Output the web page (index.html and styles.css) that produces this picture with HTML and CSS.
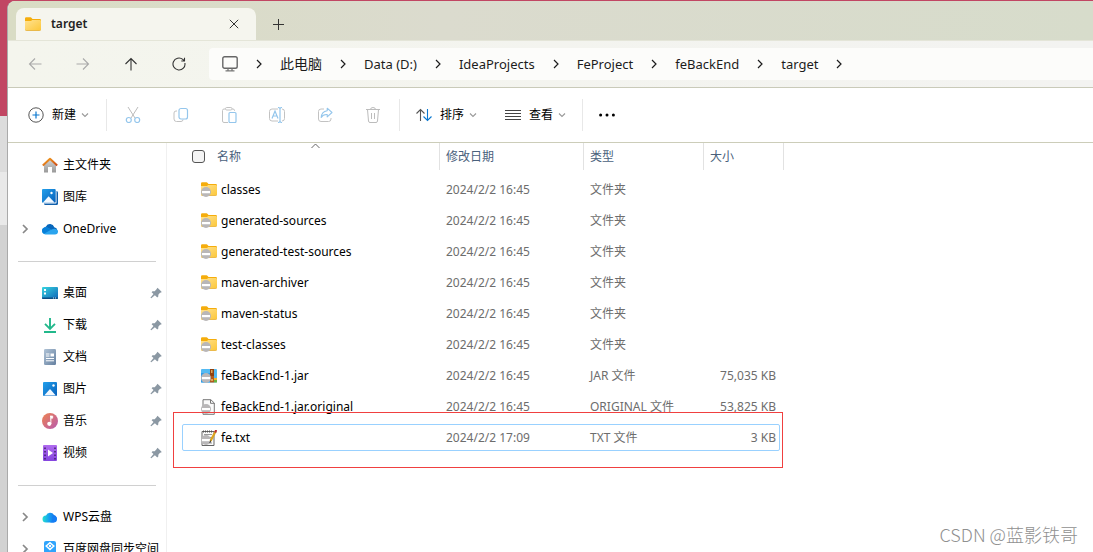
FILE: index.html
```html
<!DOCTYPE html>
<html lang="zh-CN">
<head>
<meta charset="utf-8">
<title>target</title>
<link rel="stylesheet" href="styles.css">
</head>
<body>
<svg class="defs" width="0" height="0" aria-hidden="true">
  <defs>
    <linearGradient id="gold" x1="0" y1="0" x2="1" y2="1"><stop offset="0" stop-color="#ffe291"/><stop offset="1" stop-color="#fcc739"/></linearGradient>
    <linearGradient id="silver" x1="0" y1="0" x2="0" y2="1"><stop offset="0" stop-color="#d8d8d8"/><stop offset="1" stop-color="#999"/></linearGradient>
    <linearGradient id="roof" x1="0" y1="0" x2="1" y2="1"><stop offset="0" stop-color="#f5a31f"/><stop offset="1" stop-color="#cd4b19"/></linearGradient>
    <linearGradient id="blue" x1="0" y1="0" x2="1" y2="1"><stop offset="0" stop-color="#22a0eb"/><stop offset="1" stop-color="#0860bb"/></linearGradient>
    <linearGradient id="cyan" x1="0" y1="0" x2="1" y2="1"><stop offset="0" stop-color="#37d5e0"/><stop offset="1" stop-color="#1065b8"/></linearGradient>
    <linearGradient id="steel" x1="0" y1="0" x2="1" y2="1"><stop offset="0" stop-color="#b0c3d6"/><stop offset="1" stop-color="#6580a0"/></linearGradient>
    <linearGradient id="coral" x1="0" y1="0" x2="1" y2="1"><stop offset="0" stop-color="#ef8350"/><stop offset="1" stop-color="#b65ab0"/></linearGradient>
    <linearGradient id="purple" x1="0" y1="0" x2="0" y2="1"><stop offset="0" stop-color="#b06bef"/><stop offset="1" stop-color="#8445df"/></linearGradient>
    <linearGradient id="wps" x1="0" y1="0" x2="1" y2="0"><stop offset="0" stop-color="#25e0d0"/><stop offset=".5" stop-color="#159bf2"/><stop offset="1" stop-color="#1466e8"/></linearGradient>
    <symbol id="chev" viewBox="0 0 8 10"><path d="M2 1l4 4-4 4" fill="none" stroke="currentColor" stroke-width="1.2"/></symbol>
    <symbol id="chev-bold" viewBox="0 0 8 10"><path d="M2 1l4 4-4 4" fill="none" stroke="currentColor" stroke-width="1.7"/></symbol>
    <symbol id="down" viewBox="0 0 8 6"><path d="M1 1.500l3 3 3-3" fill="none" stroke="currentColor" stroke-width="1.1"/></symbol>
    <symbol id="pin" viewBox="0 0 12 12"><path d="M7.500.8L11.400 4.500v1l-1.400.3-1.700 1.900v1.800l-1 1-2.400-2.300L1.300 11.300l-.9-.6 3.100-3.600L1.600 5.200l.9-1h2.200l1.600-1.600z" fill="#8b98a3"/></symbol>
    <symbol id="overlay" viewBox="0 0 10 10"><circle cx="5" cy="5" r="5" fill="#b9b7b8"/><path d="M1 4h8v2.200H1z" fill="#fff"/></symbol>
    <symbol id="folder" viewBox="0 0 16 14"><path d="M0 1.500Q0 .3 1.200.3h4.300q.7 0 1.100.6l.9 1.200h7.300q1.200 0 1.200 1.200V8H0z" fill="#f5ad0c"/><path d="M0 4h6l1.200-1h7.600q1.200 0 1.200 1.200v8q0 1.300-1.300 1.300H1.300Q0 13.500 0 12.200z" fill="url(#gold)"/><path d="M.2 12.700q.3.8 1.100.8h13.400q.8 0 1.100-.8" fill="none" stroke="#e3a728" stroke-width=".7"/></symbol>
    <symbol id="file-folder" viewBox="0 0 16 16"><use href="#folder" width="16" height="14"/><use href="#overlay" y="5" width="10" height="10"/></symbol>
  </defs>
</svg>

<div class="window">
  <header class="tabs">
    <div class="tab">
      <svg class="tab-icon" viewBox="0 0 16 14"><use href="#folder" width="16" height="14"/></svg>
      <span class="tab-title">target</span>
      <button class="plain" aria-label="关闭"><svg width="10" height="10" viewBox="0 0 10 10"><path d="M.8.8l8.400 8.400M9.200.8L.8 9.200" stroke="#333"/></svg></button>
    </div>
    <button class="plain add" aria-label="新标签页"><svg width="11" height="11" viewBox="0 0 11 11"><path d="M5.500 0v11M0 5.500h11" stroke="#333"/></svg></button>
  </header>

  <nav class="navbar" aria-label="导航">
    <button class="plain nav-btn faded" aria-label="后退"><svg viewBox="0 0 14 14"><path d="M7 1.500L1.500 7 7 12.500M1.500 7H13.500"/></svg></button>
    <button class="plain nav-btn faded" aria-label="前进"><svg viewBox="0 0 14 14"><path d="M7 1.500L12.500 7 7 12.500M12.500 7H.5"/></svg></button>
    <button class="plain nav-btn" aria-label="上移"><svg viewBox="0 0 14 14"><path d="M1.500 7L7 1.500 12.500 7M7 1.500V13.500"/></svg></button>
    <button class="plain nav-btn" aria-label="刷新"><svg viewBox="0 0 14 14"><path d="M12.900 6A6 6 0 1 1 10.800 2.400L12.500 4M12.500 .8V4H9.300"/></svg></button>
    <div class="address">
      <svg class="pc" viewBox="0 0 16 16"><rect x=".8" y=".8" width="14.400" height="11.400" rx="1.800" fill="none" stroke="#666" stroke-width="1.400"/><path d="M6 12.500v2M10 12.500v2M3.500 14.800h9" stroke="#777" stroke-width="1.300"/></svg>
      <svg class="sep"><use href="#chev"/></svg>
      <a href="#" class="cjk">此电脑</a><svg class="sep"><use href="#chev"/></svg>
      <a href="#">Data (D:)</a><svg class="sep"><use href="#chev"/></svg>
      <a href="#">IdeaProjects</a><svg class="sep"><use href="#chev"/></svg>
      <a href="#">FeProject</a><svg class="sep"><use href="#chev"/></svg>
      <a href="#">feBackEnd</a><svg class="sep"><use href="#chev"/></svg>
      <a href="#">target</a><svg class="sep"><use href="#chev"/></svg>
    </div>
  </nav>

  <div class="toolbar">
    <div class="group first">
      <button class="plain labeled"><svg width="16" height="16" viewBox="0 0 16 16"><circle cx="8" cy="8" r="7.200" fill="none" stroke="#555"/><path d="M8 4.500v7M4.500 8h7" stroke="#0b78d0" stroke-width="1.200"/></svg>新建<svg class="down"><use href="#down"/></svg></button>
    </div>
    <div class="group icons">
      <button class="plain" aria-label="剪切"><svg width="16" height="16" viewBox="0 0 16 16" fill="none"><path d="M3 0l7 11M13 0L6 11" stroke="#bbb"/><circle cx="3.800" cy="13" r="2.500" stroke="#94c6ec" stroke-width="1.200"/><circle cx="12.200" cy="13" r="2.500" stroke="#94c6ec" stroke-width="1.200"/></svg></button>
      <button class="plain" aria-label="复制"><svg width="16" height="16" viewBox="0 0 16 16" fill="none"><path d="M4 4H3Q1 4 1 6v6q0 2.500 2.500 2.500H8q2 0 2-2" stroke="#c2c2c2"/><rect x="6" y="1.500" width="8.500" height="10.500" rx="2" stroke="#94c6ec" stroke-width="1.200"/></svg></button>
      <button class="plain" aria-label="粘贴"><svg width="16" height="16" viewBox="0 0 16 16" fill="none"><path d="M4.500 2H3Q1.500 2 1.500 3.500v10.500q0 1.500 1.500 1.500h4M11 2h1q1.500 0 1.500 1.500V4" stroke="#c2c2c2"/><rect x="4.500" y=".5" width="6.500" height="2.500" rx="1.200" stroke="#c2c2c2"/><rect x="8" y="5.500" width="7" height="10" rx="1" stroke="#94c6ec" stroke-width="1.200"/></svg></button>
      <button class="plain" aria-label="重命名"><svg width="16" height="16" viewBox="0 0 16 16" fill="none"><path d="M9 2H3Q.5 2 .5 4.500v7Q.5 14 3 14h6M13 2q2.500 0 2.500 2.500v7q0 2.500-2.500 2.500" stroke="#c2c2c2"/><path d="M3 11.500L6 4l3 7.500M4 9h4M9 .5q2 0 2 1.500v12q0 1.500-2 1.500M13 .5q-2 0-2 1.500M11 14q0 1.500 2 1.500" stroke="#94c6ec" stroke-width="1.200"/></svg></button>
      <button class="plain" aria-label="共享"><svg width="16" height="16" viewBox="0 0 16 16" fill="none"><path d="M7 2H4Q1.500 2 1.500 4.500V12q0 2.500 2.500 2.500h7.500q2.500 0 2.500-2.500v-1" stroke="#c2c2c2"/><path d="M10.200 1.200L15 5.500l-4.800 4.300V7.500Q6 7.200 4.200 10.500 4.500 4.500 10.200 3.700z" stroke="#94c6ec" stroke-width="1.100" stroke-linejoin="round"/></svg></button>
      <button class="plain" aria-label="删除"><svg width="16" height="16" viewBox="0 0 16 16" fill="none" stroke="#bcbcbc"><path d="M1 2.500h14M5.500 2.500Q5.500.5 8 .5t2.500 2M2.500 2.500l1 11.500q.1 1.500 1.500 1.500h6q1.400 0 1.500-1.500l1-11.500M6.500 6v6M9.500 6v6"/></svg></button>
    </div>
    <div class="group views">
      <button class="plain labeled"><svg width="16" height="14" viewBox="0 0 16 14" fill="none" stroke-width="1.100"><path d="M.5 5.500l4-4 4 4M4.500 1.500V13" stroke="#555"/><path d="M7.500 8.500l4 4 4-4M11.500 1v11.500" stroke="#0b78d0"/></svg>排序<svg class="down"><use href="#down"/></svg></button>
      <button class="plain labeled"><svg width="16" height="12" viewBox="0 0 16 12"><path d="M0 1.500h16M0 4.500h16M0 7.500h16M0 10.500h16" stroke="#444"/></svg>查看<svg class="down"><use href="#down"/></svg></button>
    </div>
    <div class="group last">
      <button class="plain" aria-label="更多"><svg width="16" height="4" viewBox="0 0 16 4"><circle cx="1.600" cy="2" r="1.500"/><circle cx="8" cy="2" r="1.500"/><circle cx="14.400" cy="2" r="1.500"/></svg></button>
    </div>
  </div>

  <div class="content">
    <aside class="sidebar">
      <a href="#" class="item"><i></i><svg class="ico" viewBox="0 0 16 16"><path d="M2 7l6-5.500L14 7v8.500H10V10H6v5.500H2z" fill="url(#silver)"/><path d="M.8 8.500L8 1.800l7.200 6.700" fill="none" stroke="url(#roof)" stroke-width="2" stroke-linejoin="round"/></svg>主文件夹</a>
      <a href="#" class="item"><i></i><svg class="ico" viewBox="0 0 16 16"><rect x="2" y="2" width="14" height="14" rx="1.500" fill="#1260ac"/><rect width="14.500" height="14.500" rx="1" fill="#fff"/><rect width="13.700" height="13.700" rx="1" fill="url(#blue)"/><path d="M.8 13.700L6.600 7.200l6.200 6.500z" fill="#f3f9ff"/><circle cx="9.500" cy="4" r="1.200" fill="#fff"/></svg>图库</a>
      <a href="#" class="item"><svg class="exp"><use href="#chev-bold"/></svg><svg class="ico" viewBox="0 0 16 16"><path d="M4 13a4 4 0 0 1 0-7.500 4.500 4.500 0 0 1 8.300.7A3.500 3.500 0 0 1 13 13z" fill="#0867bb"/><path d="M3.500 13.500Q0 13 0 9.800 0 6.500 4 6.300q2.200 0 5 2.500 5-2.500 7 1.200.2 3.500-3 3.500z" fill="#2aa4ee"/><path d="M0 9.800q0-3.300 4-3.500 2.300 0 5 2.500l-7 4Q0 12 0 9.800z" fill="#087fd8"/></svg>OneDrive</a>
      <hr>
      <a href="#" class="item"><i></i><svg class="ico" viewBox="0 0 16 16"><rect y="2" width="16" height="12" rx="1" fill="url(#cyan)"/><path d="M0 12.500h16V13q0 1-1 1H1q-1 0-1-1z" fill="#0b4f85"/><path d="M2 4h2v2H2zM2 7.500h2v2H2z" fill="#fff"/><path d="M11 13h1M13 13h1" stroke="#fff" stroke-width=".8"/></svg><span>桌面</span><svg class="pin"><use href="#pin"/></svg></a>
      <a href="#" class="item"><i></i><svg class="ico" viewBox="0 0 16 16"><path d="M8 1v10M3 6.800l5 5 5-5M2 15h12" fill="none" stroke="#22b88b" stroke-width="1.900"/></svg><span>下载</span><svg class="pin"><use href="#pin"/></svg></a>
      <a href="#" class="item"><i></i><svg class="ico" viewBox="0 0 16 16"><rect x="2" width="12" height="16" rx="1.200" fill="url(#steel)"/><path d="M4 5h3.500M4 7h3.500M4 9.500h8M4 11.800h8" stroke="#fff"/><path d="M8.500 4.500H12v3H8.500z" fill="#fff"/></svg><span>文档</span><svg class="pin"><use href="#pin"/></svg></a>
      <a href="#" class="item"><i></i><svg class="ico" viewBox="0 0 16 16"><rect x="1" y="1" width="14" height="14" rx="1" fill="url(#blue)"/><path d="M2.200 14.500L8 8l5.800 6.500z" fill="#f3f9ff"/><circle cx="11.500" cy="4.500" r="1.200" fill="#fff"/></svg><span>图片</span><svg class="pin"><use href="#pin"/></svg></a>
      <a href="#" class="item"><i></i><svg class="ico" viewBox="0 0 16 16"><circle cx="8" cy="8" r="8" fill="url(#coral)"/><path d="M8 3h2.700v2.200H9V11" fill="#fff" stroke="#fff" stroke-width=".7"/><circle cx="7.300" cy="10.800" r="2.100" fill="#fff"/></svg><span>音乐</span><svg class="pin"><use href="#pin"/></svg></a>
      <a href="#" class="item"><i></i><svg class="ico" viewBox="0 0 16 16"><rect x="1" width="14" height="16" rx="1" fill="url(#purple)"/><path d="M3 2.500v12M13 2.500v12" stroke="#402068" stroke-width="1.500" stroke-dasharray="1.500 2"/><path d="M6 4.500l5 3.500-5 3.500z" fill="#fff"/></svg><span>视频</span><svg class="pin"><use href="#pin"/></svg></a>
      <hr>
      <a href="#" class="item"><svg class="exp"><use href="#chev-bold"/></svg><svg class="ico" viewBox="0 0 16 16"><path d="M4 13.500A3.500 3.500 0 0 1 4 6.500 4.500 4.500 0 0 1 12 6a3.900 3.900 0 0 1-.5 7.500z" fill="url(#wps)"/><path d="M8 13.500q3.500-2 2.500-6 4.500-1.300 4.500 2.500 0 3.500-3.500 3.500z" fill="#147df4"/></svg>WPS云盘</a>
      <a href="#" class="item"><svg class="exp"><use href="#chev-bold"/></svg><svg class="ico" viewBox="0 0 16 16"><rect x="2" y="0" width="12" height="16" rx="2" fill="#2fa4fc"/><path d="M8 1.800L11.800 5 8 8.500 4.200 5z" fill="none" stroke="#fff" stroke-width="1.500"/><circle cx="8" cy="5" r="1.200" fill="#fff"/></svg>百度网盘同步空间</a>
    </aside>

    <main class="files">
      <table>
        <colgroup><col class="c-name"><col class="c-date"><col class="c-type"><col class="c-size"></colgroup>
        <thead>
          <tr>
            <th><label class="all"><input type="checkbox">名称</label><svg class="sort" viewBox="0 0 9 6"><path d="M.5 5l4-4 4 4" fill="none" stroke="#666"/></svg></th>
            <th>修改日期</th><th>类型</th><th>大小</th>
          </tr>
        </thead>
        <tbody>
          <tr><td><svg class="fico"><use href="#file-folder"/></svg>classes</td><td>2024/2/2 16:45</td><td>文件夹</td><td></td></tr>
          <tr><td><svg class="fico"><use href="#file-folder"/></svg>generated-sources</td><td>2024/2/2 16:45</td><td>文件夹</td><td></td></tr>
          <tr><td><svg class="fico"><use href="#file-folder"/></svg>generated-test-sources</td><td>2024/2/2 16:45</td><td>文件夹</td><td></td></tr>
          <tr><td><svg class="fico"><use href="#file-folder"/></svg>maven-archiver</td><td>2024/2/2 16:45</td><td>文件夹</td><td></td></tr>
          <tr><td><svg class="fico"><use href="#file-folder"/></svg>maven-status</td><td>2024/2/2 16:45</td><td>文件夹</td><td></td></tr>
          <tr><td><svg class="fico"><use href="#file-folder"/></svg>test-classes</td><td>2024/2/2 16:45</td><td>文件夹</td><td></td></tr>
          <tr><td><svg class="fico" viewBox="0 0 16 16"><rect y="1" width="16" height="13.500" rx="1" fill="#54baf2"/><path d="M0 5h9v9.500H0z" fill="#2f9ce8"/><path d="M9 1h4v7H9z" fill="#91420f"/><path d="M9 8h4v6.500H9z" fill="#b25a1c"/><path d="M10 2h1.500v3H10zM10 11h2v2h-2z" fill="#e0a55c"/><path d="M13 10h3v2h-3z" fill="#f4b831"/><path d="M13 12h3v2.500h-3z" fill="#6cb33c"/><use href="#overlay" y="5" width="10" height="10"/></svg>feBackEnd-1.jar</td><td>2024/2/2 16:45</td><td>JAR 文件</td><td class="num">75,035 KB</td></tr>
          <tr><td><svg class="fico" viewBox="0 0 16 16"><path d="M2 .7h7.800L13.300 4v11.300H2z" fill="#fafafa" stroke="#777"/><path d="M9.500.7v3.600h3.800" fill="none" stroke="#777"/><use href="#overlay" y="5" width="10" height="10"/></svg>feBackEnd-1.jar.original</td><td>2024/2/2 16:45</td><td>ORIGINAL 文件</td><td class="num">53,825 KB</td></tr>
          <tr class="selected"><td><svg class="fico" viewBox="0 0 16 16"><path d="M1 1.500h12v14H1z" fill="#fafafa" stroke="#666"/><path d="M2 1.500h10" stroke="#555" stroke-width="2" stroke-dasharray="1 1"/><path d="M3 4.500h8M7 7.500h4M8 10.500h3M8 13h3" stroke="#999"/><use href="#overlay" y="5" width="10" height="10"/><path d="M14.500 1.500L9.500 11" stroke="#dda51d" stroke-width="2.200"/><path d="M15.300 0l-1.200 2.500" stroke="#bb3434" stroke-width="2.200"/><path d="M9.700 10.500l-.9 2.500" stroke="#333"/></svg>fe.txt</td><td>2024/2/2 17:09</td><td>TXT 文件</td><td class="num">3 KB</td></tr>
        </tbody>
      </table>
    </main>
  </div>
</div>
<div class="watermark">CSDN @蓝影铁哥</div>
</body>
</html>
```
FILE: styles.css
```css
* { box-sizing: border-box; }

body {
  margin: 0;
  height: 100vh;
  overflow: hidden;
  display: flex;
  padding: 1px 0 0 7px;
  background: linear-gradient(#c14663 0 116px, #dcdcdc 116px 172px, #e9e9e9 172px 225px, #d2d2d2 225px);
  font-family: "Noto Sans", "Noto Sans CJK SC", sans-serif;
  font-size: 12px;
  line-height: 16px;
  color: #000;
}

a { color: inherit; text-decoration: none; }
svg { display: block; flex: none; }
.defs { position: absolute; }

.plain {
  display: flex;
  align-items: center;
  justify-content: center;
  padding: 0;
  border: 0;
  background: none;
  font: inherit;
  color: inherit;
}

.window {
  flex: 1;
  min-width: 0;
  display: flex;
  flex-direction: column;
  background: #fff;
  border-left: 1px solid #aaa;
  border-radius: 8px 0 0 0;
  overflow: hidden;
}

.tabs {
  display: flex;
  align-items: flex-end;
  height: 40px;
  flex: none;
  padding-left: 8px;
  background: linear-gradient(90deg, #d9dcc4, #dbdbce 40%, #d7dccb);
  border-bottom: 1px solid #e4e5d8;
}
.tab {
  display: flex;
  align-items: center;
  width: 240px;
  height: 32px;
  padding: 0 17px 0 9px;
  background: #f5f5ee;
  border-radius: 8px 8px 0 0;
}
.tab-icon { width: 16px; height: 14px; }
.tab-title { flex: 1; margin-left: 10px; font-weight: 600; color: #222; }
.add { width: 44px; height: 32px; }

.navbar {
  display: flex;
  align-items: center;
  flex: none;
  height: 47px;
  padding-left: 3px;
  background: linear-gradient(90deg, #f4f5ed, #f3f3f1);
  border-bottom: 1px solid #c9cab9;
}
.nav-btn { width: 48px; height: 32px; }
.nav-btn svg { width: 14px; height: 14px; fill: none; stroke: #333; stroke-width: 1.1; }
.faded svg { stroke: #aaa; }
.address {
  display: flex;
  align-items: center;
  flex: 1;
  gap: 17px;
  height: 32px;
  margin-left: 6px;
  padding-left: 13px;
  background: #fcfcfa;
  border-radius: 4px 0 0 4px;
  font-size: 13px;
  color: #1c1c1c;
}
.cjk { font-size: 14px; }
.pc { width: 16px; height: 16px; }
.sep { width: 8px; height: 10px; }

.toolbar {
  display: flex;
  align-items: center;
  flex: none;
  height: 55px;
  border-bottom: 1px solid #cccdb9;
}
.group {
  display: flex;
  align-items: center;
  height: 32px;
  border-right: 1px solid #e8e8e8;
}
.group.first { padding: 0 17px 0 20px; }
.group.icons { gap: 32px; padding: 0 18px; }
.group.views { gap: 28px; padding: 0 16px; }
.group.last { border: 0; padding-left: 16px; }
.labeled { gap: 8px; }
.down { width: 8px; height: 6px; margin-left: -3px; color: #999; }

.content { flex: 1; display: flex; min-height: 0; }
.sidebar {
  flex: none;
  width: 159px;
  padding-top: 6px;
  overflow: hidden;
  border-right: 1px solid #f0f0f0;
}
.item {
  display: flex;
  align-items: center;
  height: 32px;
  padding: 0 4px 0 13px;
  white-space: nowrap;
}
.item i, .exp { width: 8px; height: 10px; flex: none; color: #888; }
.ico { width: 16px; height: 16px; margin: 0 5px 0 13px; }
.pin { width: 12px; height: 12px; margin-left: auto; }
.sidebar hr { height: 1px; margin: 16px 10px 15px 10px; border: 0; background: #d0d0d0; }

.files { flex: 1; padding-left: 15px; }
table { width: 602px; table-layout: fixed; border-collapse: separate; border-spacing: 0; }
.c-name { width: 258px; }
.c-date { width: 144px; }
.c-type { width: 120px; }
.c-size { width: 80px; }
th {
  position: relative;
  height: 27px;
  padding: 0 6px;
  border-right: 1px solid #e2e2e2;
  text-align: left;
  font-weight: 400;
  color: #4a617c;
}
th:first-child { padding-left: 10px; }
.all { display: flex; align-items: center; gap: 12px; }
.all input {
  appearance: none;
  width: 13px;
  height: 13px;
  margin: 0;
  border: 1px solid #555;
  border-radius: 3px;
  background: #f4f4f4;
}
.sort { position: absolute; top: 0; left: 50%; width: 9px; height: 6px; }
tbody::before { content: ""; display: block; height: 4px; }
td { height: 31px; padding: 0 8px 0 6px; color: #6d6d6d; white-space: nowrap; }
td:first-child { padding-left: 39px; color: #000; }
.fico { float: left; width: 16px; height: 16px; margin-left: -20px; }
.num { text-align: right; }

.selected { position: relative; }
.selected td:first-child::before,
.selected td:first-child::after { content: ""; position: absolute; pointer-events: none; }
.selected td:first-child::before { inset: 2px 4px 2px 0; border: 1px solid #99d1ff; border-radius: 2px; }
.selected td:first-child::after { inset: -10px 1px -15px -9px; border: 1px solid #f04040; }

.watermark {
  position: absolute;
  right: 15px;
  bottom: 6px;
  font: 300 18px/24px "Noto Sans CJK SC", sans-serif;
  color: #909090;
}
```
